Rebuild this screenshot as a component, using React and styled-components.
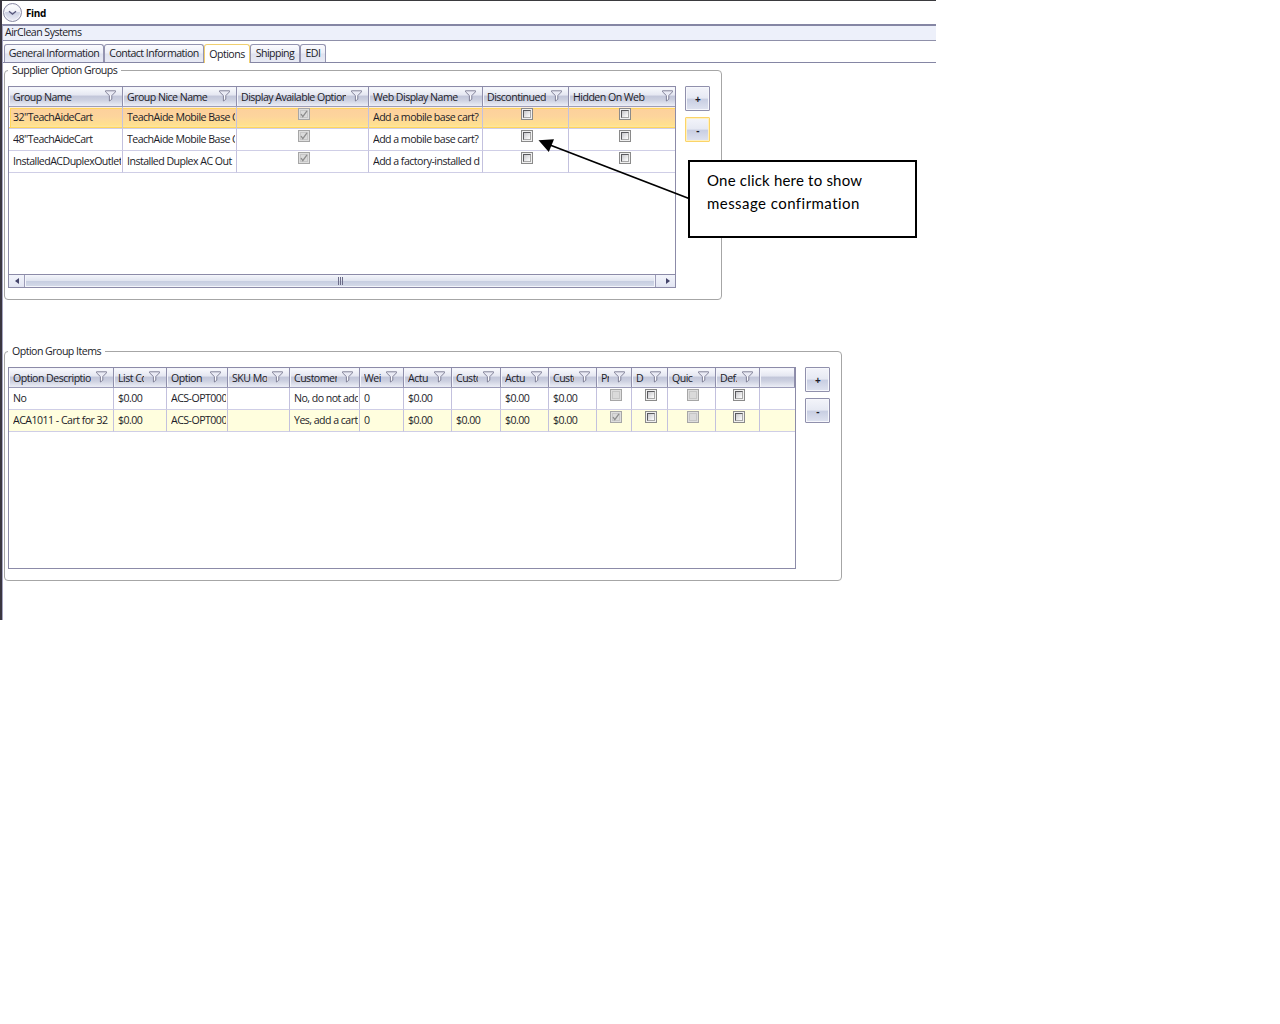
import React from 'react'
import styled, { createGlobalStyle } from 'styled-components'

const groupColumns = [
    { title: 'Group Name', width: 114 },
    { title: 'Group Nice Name', width: 114 },
    { title: 'Display Available Option', width: 132 },
    { title: 'Web Display Name', width: 114 },
    { title: 'Discontinued', width: 86 },
    { title: 'Hidden On Web', width: 106, last: true },
]

const groupRows = [
    { state: 'selected', cells: ['32"TeachAideCart', 'TeachAide Mobile Base C', { checked: true, disabled: true }, 'Add a mobile base cart?', {}, { shift: 6 }] },
    { cells: ['48"TeachAideCart', 'TeachAide Mobile Base C', { checked: true, disabled: true }, 'Add a mobile base cart?', {}, { shift: 6 }] },
    { cells: ['InstalledACDuplexOutlet', 'Installed Duplex AC Out', { checked: true, disabled: true }, 'Add a factory-installed d', {}, { shift: 6 }] },
]

const itemColumns = [
    { title: 'Option Description', width: 105 },
    { title: 'List Co', width: 53 },
    { title: 'Option', width: 61 },
    { title: 'SKU Mo', width: 62 },
    { title: 'Customer', width: 70 },
    { title: 'Wei', width: 44 },
    { title: 'Actu', width: 48 },
    { title: 'Custo', width: 49 },
    { title: 'Actu', width: 48 },
    { title: 'Custo', width: 48 },
    { title: 'Pr', width: 35 },
    { title: 'D', width: 36 },
    { title: 'Quic', width: 48 },
    { title: 'Def.', width: 44 },
    { title: '', width: 35 },
]

const itemRows = [
    { cells: ['No', '$0.00', 'ACS-OPT000', '', 'No, do not add', '0', '$0.00', '', '$0.00', '$0.00', { disabled: true }, {}, { disabled: true }, {}, ''] },
    { state: 'alternate', cells: ['ACA1011 - Cart for 32', '$0.00', 'ACS-OPT000', '', 'Yes, add a cart', '0', '$0.00', '$0.00', '$0.00', '$0.00', { checked: true, disabled: true }, {}, { disabled: true }, {}, ''] },
]

const Funnel = () => (
    <svg width="11" height="12" viewBox="0 0 11 12">
        <path d="M.5 .8H10.5V1.8L6.8 5.6V9.2L4.4 11V5.6L.5 1.8Z" fill="#e9eaf4" stroke="#77778f" strokeWidth=".9" />
        <path d="M5.5 5.5V9.5" stroke="#fff" strokeWidth=".8" />
    </svg>
)

const CheckBox = ({ checked, disabled }) => (
    <Box $disabled={disabled}>
        <BoxInner $disabled={disabled}>
            {checked && (
                <svg width="8" height="8" viewBox="0 0 8 8">
                    <path d="M1 4L2.8 6.6L7 .8" fill="none" stroke="#8c8c8c" strokeWidth="1.3" />
                </svg>
            )}
        </BoxInner>
    </Box>
)

const DataGrid = ({ columns, rows, width, children }) => (
    <Grid $width={width}>
        <HeadRow>
            {columns.map((col, i) => (
                <HeadCell key={i} $width={col.width} $last={col.last}>
                    <span>{col.title}</span>
                    {col.title && <Funnel />}
                </HeadCell>
            ))}
        </HeadRow>
        {rows.map((row, i) => (
            <Row key={i} $state={row.state}>
                {row.cells.map((cell, j) =>
                    typeof cell === 'string' ? (
                        <Cell key={j} $width={columns[j].width}><span>{cell}</span></Cell>
                    ) : (
                        <CheckCell key={j} $width={columns[j].width} $shift={cell.shift}>
                            <CheckBox {...cell} />
                        </CheckCell>
                    )
                )}
            </Row>
        ))}
        <Filler />
        {children}
    </Grid>
)

const GroupBox = ({ title, width, children }) => (
    <Group $width={width}>
        <Legend><span>{title}</span></Legend>
        <GroupBody>{children}</GroupBody>
    </Group>
)

const App = () => {
    return (
        <Window>
            <GlobalStyle />
            <FindBar>
                <Expander>
                    <svg width="9" height="6" viewBox="0 0 9 6">
                        <path d="M1 1.2L4.5 4.2L8 1.2" fill="none" stroke="#55557a" strokeWidth="1.3" />
                    </svg>
                </Expander>
                <b>Find</b>
            </FindBar>
            <Content>
                <Supplier>AirClean Systems</Supplier>
                <Tabs>
                    <Tab $width={100}>General Information</Tab>
                    <Tab $width={100}>Contact Information</Tab>
                    <Tab $width={46} $active>Options</Tab>
                    <Tab $width={50}>Shipping</Tab>
                    <Tab $width={26}>EDI</Tab>
                </Tabs>
                <Panels>
                    <GroupBox title="Supplier Option Groups" width={718}>
                        <DataGrid columns={groupColumns} rows={groupRows} width={668}>
                            <ScrollBar>
                                <ScrollButton $width={16}>
                                    <svg width="4" height="6" viewBox="0 0 4 6"><path d="M4 0V6L0 3Z" fill="#44446a" /></svg>
                                </ScrollButton>
                                <Thumb><i /><i /><i /></Thumb>
                                <ScrollButton $width={20} $right>
                                    <svg width="4" height="6" viewBox="0 0 4 6"><path d="M0 0V6L4 3Z" fill="#44446a" /></svg>
                                </ScrollButton>
                            </ScrollBar>
                        </DataGrid>
                        <Buttons>
                            <Button>+</Button>
                            <Button $hot>-</Button>
                        </Buttons>
                    </GroupBox>
                    <GroupBox title="Option Group Items" width={838}>
                        <DataGrid columns={itemColumns} rows={itemRows} width={788} />
                        <Buttons>
                            <Button>+</Button>
                            <Button>-</Button>
                        </Buttons>
                    </GroupBox>
                </Panels>
            </Content>
            <Arrow width="160" height="70" viewBox="530 135 160 70">
                <path d="M550 145L689 198.5" stroke="#000" strokeWidth="1.8" />
                <path d="M538.5 140.3L554 139.2L548.8 152Z" fill="#000" />
            </Arrow>
            <Callout>
                <p>One click here to show</p>
                <p>message confirmation</p>
            </Callout>
        </Window>
    )
}

export default App

const GlobalStyle = createGlobalStyle`
*{
    box-sizing:border-box;
}
body{
    margin:0;
    background:#fff;
    font-family:"Open Sans","Noto Sans",sans-serif;
    font-size:10.6px;
    letter-spacing:-0.53px;
    color:#1c1c28;
}
svg{
    display:block;
    flex:none;
}
p{
    margin:0;
}
`
const Window = styled.div`
position:relative;
width:936px;
height:620px;
display:flex;
flex-direction:column;
border-top:1px solid #3a3a3e;
border-left:2px solid #3a3640;
white-space:nowrap;
`
const FindBar = styled.div`
display:flex;
align-items:center;
gap:4px;
height:23px;
padding-left:1px;
b{
    font-size:10px;
    letter-spacing:-0.4px;
    color:#000;
    padding-top:1px;
}
`
const Expander = styled.div`
width:19px;
height:19px;
display:flex;
align-items:center;
justify-content:center;
border:1px solid #8a8aa4;
border-radius:50%;
background:linear-gradient(#fff, #f0f1f8 45%, #cdd1e4 50%, #eef0f8);
box-shadow:inset 0 0 0 1px #f4f4fa;
`
const Content = styled.div`
flex:1;
display:flex;
flex-direction:column;
border-top:2px solid #8586a4;
border-left:1px solid #a5a5c0;
`
const Supplier = styled.div`
height:15px;
padding-left:2px;
line-height:13px;
background:#edf0fa;
border-bottom:1px solid #8f90aa;
`
const Tabs = styled.div`
display:flex;
align-items:flex-end;
height:22px;
padding-left:1px;
border-bottom:1px solid #8586a4;
`
const Tab = styled.div`
width:${p => p.$width}px;
height:${p => p.$active ? 19 : 18}px;
margin-bottom:${p => p.$active ? -1 : 0}px;
line-height:${p => p.$active ? 18 : 17}px;
text-align:center;
border:1px solid ${p => p.$active ? '#f0cf70' : '#9494b0'};
border-bottom:none;
border-radius:3px 3px 0 0;
background:${p => p.$active ? '#fff' : 'linear-gradient(#fbfbfe, #eceef7 48%, #dfe2ef 52%, #e9ebf5)'};
`
const Panels = styled.div`
display:flex;
flex-direction:column;
gap:51px;
padding:7px 0 0 1px;
`
const Group = styled.section`
width:${p => p.$width}px;
height:230px;
border:1px solid #a6a6a6;
border-radius:4px;
`
const Legend = styled.div`
height:15px;
margin-top:-8px;
padding-left:3px;
line-height:14px;
span{
    display:inline-block;
    padding:0 4px;
    background:#fff;
}
`
const GroupBody = styled.div`
display:flex;
align-items:flex-start;
gap:9px;
padding:8px 0 0 3px;
`
const Grid = styled.div`
width:${p => p.$width}px;
height:202px;
display:flex;
flex-direction:column;
border:1px solid #8c8ba8;
`
const HeadRow = styled.div`
display:flex;
height:20px;
flex:none;
border-bottom:1px solid #9c9cb8;
`
const HeadCell = styled.div`
width:${p => p.$width}px;
flex:none;
display:flex;
align-items:flex-start;
gap:5px;
padding:3px ${p => p.$last ? 2 : 6}px 0 4px;
border-right:${p => p.$last ? 'none' : '1px solid #8f8fac'};
background:linear-gradient(#fafbfe, #e6e8f2 40%, #c3c7da 50%, #ccd0e0 68%, #eceef6);
box-shadow:inset 1px 1px 0 #f4f5fb;
span{
    flex:1;
    min-width:0;
    height:16px;
    line-height:15px;
    overflow:hidden;
}
`
const rowFill = {
    selected: 'linear-gradient(#fccf9c, #fdd59c 45%, #ffe08f 80%, #ffe9a8)',
    alternate: '#fffede',
}
const Row = styled.div`
display:flex;
height:22px;
flex:none;
background:${p => rowFill[p.$state] || '#fff'};
box-shadow:${p => p.$state === 'selected' ? 'inset 0 1px 0 #fdeedd, inset 0 -2px 0 #ffd65c, inset 1px 0 0 #fff, inset 2px 2px 0 #ffd65c' : 'none'};
`
const BaseCell = styled.div`
width:${p => p.$width}px;
flex:none;
display:flex;
border-right:1px solid #c3c1de;
border-bottom:1px solid #cfcee6;
&:last-child{
    border-right:none;
}
`
const Cell = styled(BaseCell)`
padding:3px 1px 0 4px;
span{
    flex:1;
    min-width:0;
    line-height:15px;
    overflow:hidden;
}
`
const CheckCell = styled(BaseCell)`
justify-content:center;
padding:1px 0 0 ${p => p.$shift || 3}px;
`
const Box = styled.div`
width:12px;
height:12px;
padding:1px;
border:1px solid ${p => p.$disabled ? '#a6a6a6' : '#8a8a8a'};
background:${p => p.$disabled ? '#dedede' : '#f0f0f0'};
`
const BoxInner = styled.div`
width:8px;
height:8px;
border:1px solid ${p => p.$disabled ? '#c6c6c6' : '#5a5a5e'};
border-right-color:${p => p.$disabled ? '#c6c6c6' : '#a8a8a8'};
border-bottom-color:${p => p.$disabled ? '#c6c6c6' : '#a8a8a8'};
background:${p => p.$disabled ? '#dadada' : 'linear-gradient(135deg, #c8c8cc, #fff)'};
svg{
    margin:-1px;
}
`
const Filler = styled.div`
flex:1;
`
const ScrollBar = styled.div`
display:flex;
height:13px;
border-top:1px solid #8c8ba8;
`
const ScrollButton = styled.div`
width:${p => p.$width}px;
display:flex;
align-items:center;
justify-content:center;
padding-left:${p => p.$right ? 4 : 0}px;
border-${p => p.$right ? 'left' : 'right'}:1px solid #9c9cb8;
background:linear-gradient(#f2f4fb, #e2e5f2);
`
const Thumb = styled.div`
flex:1;
display:flex;
align-items:center;
justify-content:center;
gap:1px;
border:1px solid #f3f5fb;
background:linear-gradient(#f0f2f9, #e1e5f0 45%, #c6cde0 50%, #d3d9e8);
i{
    width:1px;
    height:8px;
    background:#6c6c88;
}
`
const Buttons = styled.div`
display:flex;
flex-direction:column;
gap:6px;
`
const Button = styled.div`
width:25px;
height:25px;
line-height:24px;
text-align:center;
font-size:10px;
font-weight:700;
border:1px solid ${p => p.$hot ? '#fbd468' : '#9090ac'};
border-radius:1px;
box-shadow:inset 0 0 0 1px ${p => p.$hot ? '#fff0c0' : '#f6f7fc'};
background:linear-gradient(#f3f4fa, #e6e9f3 48%, #c8cee2 53%, #dfe3f0);
`
const Arrow = styled.svg`
position:absolute;
left:528px;
top:134px;
`
const Callout = styled.div`
position:absolute;
left:686px;
top:159px;
width:229px;
height:78px;
padding:7px 17px;
border:2px solid #000;
background:#fff;
font-family:Lato,sans-serif;
font-size:15px;
letter-spacing:0.2px;
line-height:23px;
color:#000;
p:last-child{
    letter-spacing:0.45px;
}
`
